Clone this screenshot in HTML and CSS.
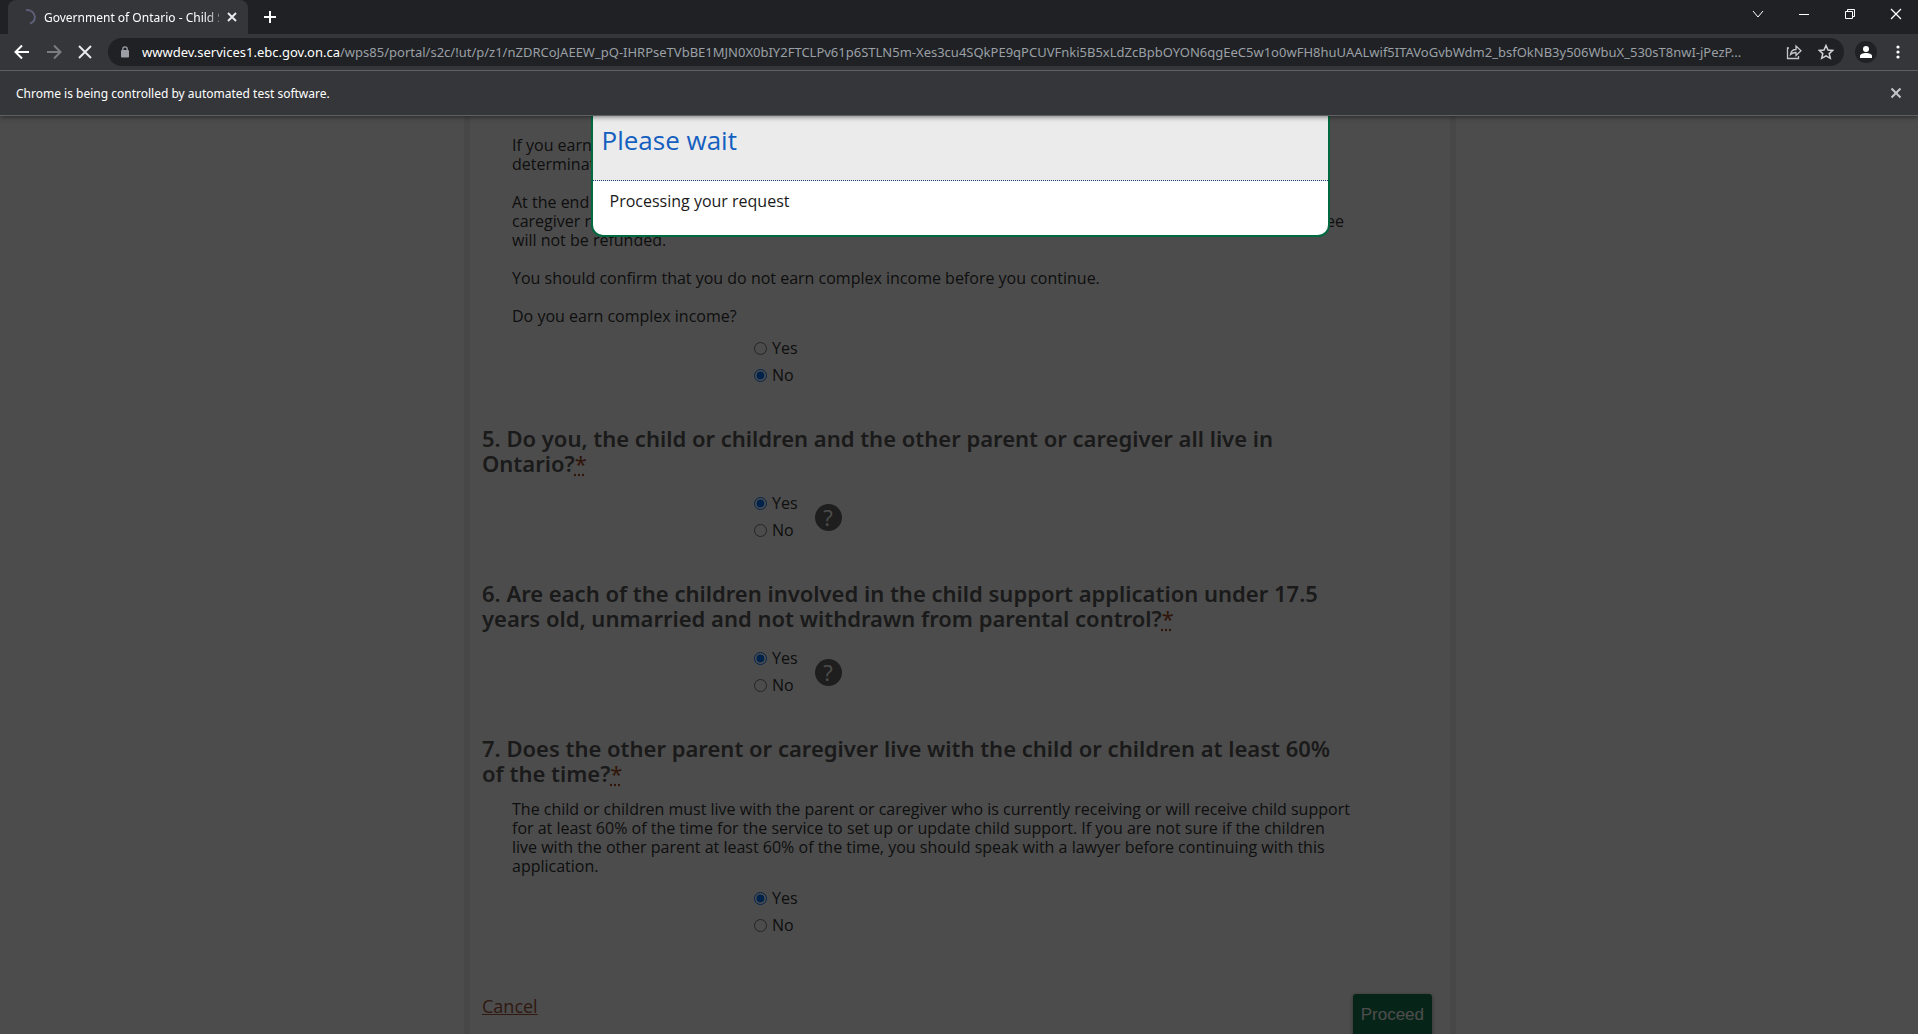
FILE: index.html
```html
<!DOCTYPE html>
<html lang="en">
<head>
<meta charset="utf-8">
<title>Government of Ontario - Child Support</title>
<link rel="stylesheet" href="styles.css">
</head>
<body>
<header class="browser">
  <div class="tabstrip">
    <div class="tab">
      <svg class="spinner" width="16" height="16" viewBox="0 0 16 16" aria-hidden="true"><path d="M6 1.200c4-.8 8.500 2 8.800 6.400C15 11 12.800 13.500 10 14.500" fill="none" stroke="#5c5f78" stroke-width="2"/></svg>
      <span class="tab-title">Government of Ontario - Child Support</span>
      <button class="icon-btn" aria-label="Close tab"><svg width="10" height="10" viewBox="0 0 10 10"><path d="M1 1l8 8M9 1l-8 8" stroke="#e8eaed" stroke-width="2"/></svg></button>
    </div>
    <button class="icon-btn new-tab" aria-label="New tab"><svg width="12" height="12" viewBox="0 0 12 12"><path d="M6 0v12M0 6h12" stroke="#fff" stroke-width="2"/></svg></button>
    <div class="window-controls">
      <button class="icon-btn" aria-label="Search tabs"><svg width="12" height="12" viewBox="0 0 12 12"><path d="M1 3l5 6 5-6" fill="none" stroke="#fff"/></svg></button>
      <button class="icon-btn" aria-label="Minimize"><svg width="12" height="12" viewBox="0 0 12 12"><path d="M1 6.500h10" stroke="#fff"/></svg></button>
      <button class="icon-btn" aria-label="Restore"><svg width="12" height="12" viewBox="0 0 12 12"><path d="M1.500 3.500h7v7h-7zM3.500 3.500v-2h7v7h-2" fill="none" stroke="#fff"/></svg></button>
      <button class="icon-btn" aria-label="Close window"><svg width="12" height="12" viewBox="0 0 12 12"><path d="M1 1l10 10M11 1L1 11" stroke="#fff" stroke-width="1.300"/></svg></button>
    </div>
  </div>
  <div class="toolbar">
    <nav class="history">
      <button class="icon-btn" aria-label="Back"><svg width="16" height="16" viewBox="0 0 16 16"><path d="M15 8H2M8 1.500L1.500 8 8 14.500" fill="none" stroke="#fff" stroke-width="2"/></svg></button>
      <button class="icon-btn" aria-label="Forward"><svg width="16" height="16" viewBox="0 0 16 16"><path d="M1 8h13M8 1.500L14.500 8 8 14.500" fill="none" stroke="#7b7d80" stroke-width="2"/></svg></button>
      <button class="icon-btn" aria-label="Stop"><svg width="14" height="14" viewBox="0 0 14 14"><path d="M1 1l12 12M13 1L1 13" stroke="#e8eaed" stroke-width="2"/></svg></button>
    </nav>
    <div class="address">
      <svg class="lock" width="10" height="12" viewBox="0 0 10 12" aria-hidden="true"><rect x="1" y="4" width="8" height="7.500" rx="1" fill="#9aa0a6"/><path d="M2.800 5V3a2.200 2.200 0 0 1 4.400 0v2" fill="none" stroke="#9aa0a6" stroke-width="1.300"/></svg>
      <span class="url"><span class="host">wwwdev.services1.ebc.gov.on.ca</span>/wps85/portal/s2c/!ut/p/z1/nZDRCoJAEEW_pQ-IHRPseTVbBE1MJN0X0bIY2FTCLPv61p6STLN5m-Xes3cu4SQkPE9qPCUVFnki5B5xLdZcBpbOYON6qgEeC5w1o0wFH8huUAALwif5ITAVoGvbWdm2_bsfOkNB3y506WbuX_530sT8nwI-jPezP...</span>
      <button class="icon-btn" aria-label="Share"><svg width="16" height="16" viewBox="0 0 16 16"><path d="M3 4H1.500v10.500h11V12M4.500 10.500c.5-3.500 2.500-5 5.500-5V2l5 4.700-5 4.800v-3c-2.500 0-4 .5-5.500 2z" fill="none" stroke="#c4c7ca" stroke-width="1.300"/></svg></button>
      <button class="icon-btn star" aria-label="Bookmark"><svg width="16" height="16" viewBox="0 0 16 16"><path d="M8 1.500l2 4.500 4.800.4-3.600 3.200 1.100 4.700L8 11.800l-4.300 2.500 1.100-4.700L1.200 6.400 6 6z" fill="none" stroke="#d2d4d6" stroke-width="1.500"/></svg></button>
    </div>
    <button class="icon-btn profile" aria-label="Profile"><svg width="14" height="14" viewBox="0 0 14 14"><circle cx="7" cy="4" r="3" fill="#fff"/><path d="M1 13v-2c0-2 3-3 6-3s6 1 6 3v2z" fill="#fff"/></svg></button>
    <button class="icon-btn menu" aria-label="Menu"><svg width="4" height="14" viewBox="0 0 4 14"><g fill="#fff"><circle cx="2" cy="2" r="1.600"/><circle cx="2" cy="7" r="1.600"/><circle cx="2" cy="12" r="1.600"/></g></svg></button>
  </div>
  <div class="infobar">
    <span>Chrome is being controlled by automated test software.</span>
    <button class="icon-btn" aria-label="Dismiss"><svg width="12" height="12" viewBox="0 0 12 12"><path d="M1.500 1.500l9 9M10.500 1.500l-9 9" stroke="#c4c7ca" stroke-width="2"/></svg></button>
  </div>
</header>
<div class="viewport">
  <main class="sheet">
    <section class="question">
      <div class="copy">
        <p>If you earn<br>determinat</p>
        <p>At the end<br><span class="split"><span>caregiver r</span><span>fee</span></span>will not be refunded.</p>
        <p>You should confirm that you do not earn complex income before you continue.</p>
        <p>Do you earn complex income?</p>
      </div>
      <div class="answer"><div class="options">
        <label><input type="radio" name="q4">Yes</label>
        <label><input type="radio" name="q4" checked>No</label>
      </div></div>
    </section>
    <section class="question">
      <h2>5. Do you, the child or children and the other parent or caregiver all live in Ontario?<abbr title="required">*</abbr></h2>
      <div class="answer"><div class="options">
        <label><input type="radio" name="q5" checked>Yes</label>
        <label><input type="radio" name="q5">No</label>
      </div><button class="help" aria-label="Help">?</button></div>
    </section>
    <section class="question">
      <h2>6. Are each of the children involved in the child support application under 17.5 years old, unmarried and not withdrawn from parental control?<abbr title="required">*</abbr></h2>
      <div class="answer"><div class="options">
        <label><input type="radio" name="q6" checked>Yes</label>
        <label><input type="radio" name="q6">No</label>
      </div><button class="help" aria-label="Help">?</button></div>
    </section>
    <section class="question">
      <h2>7. Does the other parent or caregiver live with the child or children at least 60% of the time?<abbr title="required">*</abbr></h2>
      <div class="copy">
        <p>The child or children must live with the parent or caregiver who is currently receiving or will receive child support for at least 60% of the time for the service to set up or update child support. If you are not sure if the children live with the other parent at least 60% of the time, you should speak with a lawyer before continuing with this application.</p>
      </div>
      <div class="answer"><div class="options">
        <label><input type="radio" name="q7" checked>Yes</label>
        <label><input type="radio" name="q7">No</label>
      </div></div>
    </section>
    <footer class="actions">
      <a href="#">Cancel</a>
      <button class="proceed">Proceed</button>
    </footer>
  </main>
  <div class="backdrop">
    <div class="dialog" role="dialog" aria-labelledby="wait-title">
      <h1 id="wait-title">Please wait</h1>
      <p>Processing your request</p>
    </div>
  </div>
</div>
</body>
</html>
```
FILE: styles.css
```css
* { box-sizing: border-box; }
body {
  margin: 0;
  height: 100vh;
  display: flex;
  flex-direction: column;
  overflow: hidden;
  font-family: "Open Sans", "Noto Sans", sans-serif;
  font-size: 16px;
  line-height: 19px;
  color: #333;
}
.icon-btn {
  display: flex;
  align-items: center;
  justify-content: center;
  flex: none;
  padding: 0;
  border: 0;
  background: none;
}

/* Browser frame */
.browser {
  position: relative;
  z-index: 2;
  flex: none;
  background: #35363a;
  color: #fff;
  font-family: "Noto Sans", "Open Sans", sans-serif;
  font-size: 12px;
  box-shadow: 0 1px 5px rgba(0, 0, 0, .5);
}
.tabstrip {
  display: flex;
  height: 34px;
  padding-left: 8px;
  background: #202124;
}
.tab {
  display: flex;
  align-items: center;
  width: 240px;
  padding: 0 11px 0 12px;
  gap: 8px;
  border-radius: 8px 8px 0 0;
  background: #35363a;
}
.spinner { flex: none; }
.tab-title {
  flex: 1;
  overflow: hidden;
  white-space: nowrap;
  -webkit-mask-image: linear-gradient(to right, #000 160px, transparent 184px);
  mask-image: linear-gradient(to right, #000 160px, transparent 184px);
}
.new-tab { width: 44px; }
.window-controls {
  display: flex;
  gap: 2px;
  margin-left: auto;
  height: 28px;
}
.window-controls .icon-btn { width: 44px; }
.toolbar {
  display: flex;
  align-items: center;
  height: 36px;
  padding: 0 18px 0 14px;
}
.history {
  display: flex;
  align-items: center;
  gap: 16px;
  margin-right: 16px;
}
.address {
  display: flex;
  align-items: center;
  flex: 1;
  min-width: 0;
  height: 28px;
  padding: 0 10px 0 12px;
  gap: 12px;
  border-radius: 14px;
  background: #202124;
}
.lock { flex: none; }
.star { margin-left: 4px; }
.url {
  flex: 1;
  overflow: hidden;
  white-space: nowrap;
  font-size: 13px;
  color: #9aa0a6;
}
.host { color: #fff; }
.profile {
  width: 22px;
  height: 22px;
  margin-left: 11px;
  border-radius: 50%;
  background: #202124;
}
.menu { margin-left: 19px; }
.infobar {
  display: flex;
  align-items: center;
  justify-content: space-between;
  height: 46px;
  padding: 0 16px;
  border-top: 1px solid #5f6063;
  border-bottom: 1px solid #5f6063;
}

/* Page */
.viewport {
  position: relative;
  flex: 1;
  min-height: 0;
  padding-left: 2px;
  overflow: hidden;
  background: #fff;
}
.sheet {
  width: 100%;
  max-width: 992px;
  margin: 0 auto;
  padding: 20px 18px 0 12px;
  border: solid #ededed;
  border-width: 0 6px;
}
.question { margin-bottom: 37px; }
.copy { padding: 0 80px 0 30px; }
.copy p { margin: 0 0 19px; }
.copy p:last-child { margin-bottom: 9px; }
.split {
  display: flex;
  justify-content: space-between;
  padding-right: 8px;
}
h2 {
  margin: 0 80px 14px 0;
  font-family: "Noto Sans", "Open Sans", sans-serif;
  font-size: 22px;
  line-height: 25px;
  font-weight: 600;
  color: #595959;
}
abbr {
  color: #a04a20;
  font-weight: 400;
}
.answer {
  display: flex;
  align-items: center;
  padding-left: 272px;
  gap: 17px;
}
.options label {
  display: flex;
  align-items: center;
  height: 27px;
  gap: 5px;
}
input[type="radio"] {
  width: 13px;
  height: 13px;
  margin: 0;
}
.help {
  display: flex;
  align-items: center;
  justify-content: center;
  width: 27px;
  height: 27px;
  padding: 0;
  border: 0;
  border-radius: 50%;
  background: #666;
  color: #fff;
  font: 22px/24px "Open Sans", sans-serif;
}
.actions {
  display: flex;
  justify-content: space-between;
  align-items: flex-start;
  padding-top: 18px;
  font-size: 18px;
}
.actions a { color: #a0553a; line-height: 24px; }
.proceed {
  height: 42px;
  padding: 0 8px;
  border: 0;
  border-radius: 3px;
  background: #1a7a50;
  box-shadow: 0 1px 4px rgba(0, 0, 0, .4);
  color: #fff;
  font: 17px "Liberation Sans", sans-serif;
}
.backdrop {
  position: absolute;
  inset: 0;
  padding-left: 2px;
  background: rgba(0, 0, 0, .7);
}
.dialog {
  width: 100%;
  max-width: 739px;
  margin: 0 auto;
  overflow: hidden;
  border: 2px solid #00693f;
  border-top: 0;
  border-radius: 0 0 12px 12px;
  background: #fff;
  color: #1a1a1a;
}
.dialog h1 {
  margin: 0;
  padding: 8px 9px 24px;
  border-bottom: 1px dotted #1a3f6f;
  background: #ebebeb;
  color: #1460c0;
  font-size: 26px;
  line-height: 32px;
  font-weight: 400;
}
.dialog p { margin: 0; padding: 11px 17px 24px; }
```
